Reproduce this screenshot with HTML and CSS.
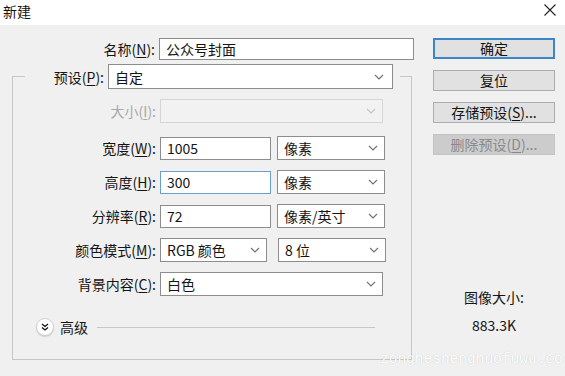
FILE: index.html
```html
<!DOCTYPE html>
<html>
<head>
  <meta charset="utf-8" />
  <title>新建</title>
  <meta name="viewport" content="width=device-width, initial-scale=1">
  <link rel="stylesheet" href="styles.css">
</head>
<body>
  <div class="dialog">
    <div class="titlebar">
      <span class="title">新建</span>
      <svg class="close" width="12" height="12" viewBox="0 0 12 12">
        <path d="M0.5 0.5 L11.5 11.5 M11.5 0.5 L0.5 11.5" stroke="#222" stroke-width="1.1" fill="none"/>
      </svg>
    </div>

    <div class="content">
      <div class="form">
        <div class="row name-row">
          <span class="lbl">名称(<u>N</u>):</span>
          <div class="field w-name">公众号封面</div>
        </div>

        <fieldset class="group">
          <legend class="preset">
            <span class="lbl lbl-preset">预设(<u>P</u>):</span>
            <div class="select w-preset">自定<svg class="chev" viewBox="0 0 10 6"><polyline points="1,1 5,5 9,1"/></svg></div>
          </legend>

          <div class="row row-size">
            <span class="lbl off">大小(<u>I</u>):</span>
            <div class="select off w-full"><svg class="chev" viewBox="0 0 10 6"><polyline points="1,1 5,5 9,1"/></svg></div>
          </div>

          <div class="row">
            <span class="lbl">宽度(<u>W</u>):</span>
            <div class="field w-num">1005</div>
            <div class="select w-unit">像素<svg class="chev" viewBox="0 0 10 6"><polyline points="1,1 5,5 9,1"/></svg></div>
          </div>

          <div class="row">
            <span class="lbl">高度(<u>H</u>):</span>
            <div class="field w-num focus">300</div>
            <div class="select w-unit">像素<svg class="chev" viewBox="0 0 10 6"><polyline points="1,1 5,5 9,1"/></svg></div>
          </div>

          <div class="row">
            <span class="lbl">分辨率(<u>R</u>):</span>
            <div class="field w-num">72</div>
            <div class="select w-unit">像素/英寸<svg class="chev" viewBox="0 0 10 6"><polyline points="1,1 5,5 9,1"/></svg></div>
          </div>

          <div class="row">
            <span class="lbl">颜色模式(<u>M</u>):</span>
            <div class="select w-mode">RGB 颜色<svg class="chev" viewBox="0 0 10 6"><polyline points="1,1 5,5 9,1"/></svg></div>
            <div class="select w-unit">8 位<svg class="chev" viewBox="0 0 10 6"><polyline points="1,1 5,5 9,1"/></svg></div>
          </div>

          <div class="row">
            <span class="lbl">背景内容(<u>C</u>):</span>
            <div class="select w-full">白色<svg class="chev" viewBox="0 0 10 6"><polyline points="1,1 5,5 9,1"/></svg></div>
          </div>

          <div class="advanced">
            <span class="adv-btn">
              <svg width="8" height="8" viewBox="0 0 8 8"><path d="M1 1 L4 3.5 L7 1 M1 4.5 L4 7 L7 4.5" stroke="#111" stroke-width="1.3" fill="none"/></svg>
            </span>
            <span class="adv-text">高级</span>
            <span class="adv-line"></span>
          </div>
        </fieldset>
      </div>

      <div class="side">
        <div class="btn default">确定</div>
        <div class="btn">复位</div>
        <div class="btn">存储预设(<u>S</u>)...</div>
        <div class="btn disabled">删除预设(<u>D</u>)...</div>
        <div class="info">
          <p>图像大小:</p>
          <p>883.3K</p>
        </div>
      </div>
    </div>

    <div class="watermark">zongheshenghuofuwu.co</div>
  </div>
</body>
</html>
```

FILE: styles.css
```css
html, body {
  margin: 0px;
  padding: 0px;
}
body {
  background: #f0f0f0;
  font-family: "Noto Sans CJK SC", "Noto Sans", sans-serif;
  font-size: 14px;
  color: #141414;
}
.dialog {
  position: relative;
  width: 565px;
  height: 376px;
  overflow: hidden;
}

/* title bar */
.titlebar {
  height: 25px;
  background: #fff;
  display: flex;
  align-items: center;
  justify-content: space-between;
  padding: 0 9px 0 3px;
  box-sizing: border-box;
}
.title {
  font-size: 14px;
  line-height: 20px;
  margin-top: -3px;
}
.close {
  margin-top: -5px;
}

/* body */
.content {
  display: flex;
  padding: 13px 0 0 12px;
  gap: 18px;
}
.form {
  width: 403px;
}
.row {
  display: flex;
  align-items: center;
  height: 24px;
  gap: 4px;
  margin-bottom: 10px;
}
.lbl {
  width: 143px;
  text-align: right;
  white-space: nowrap;
  line-height: 24px;
}
.lbl.off {
  color: #a8a8a8;
}
u {
  text-decoration: underline;
  text-underline-offset: 2px;
}

.field, .select {
  height: 23px;
  box-sizing: border-box;
  border: 1px solid #8d8d8d;
  background: #fff;
  padding: 0 6px;
  line-height: 21px;
  white-space: nowrap;
}
.select {
  height: 24px;
  line-height: 22px;
  display: flex;
  align-items: center;
  padding-right: 4px;
}
.select.off {
  background: #f2f2f2;
  border-color: #d6d6d6;
}
.select.off .chev polyline {
  stroke: #c4c4c4;
}
.field.focus {
  border-color: #6a9fcc;
}
.chev {
  width: 10px;
  height: 6px;
  margin: 0 2px 0 auto;
}
.chev polyline {
  fill: none;
  stroke: #707070;
  stroke-width: 1.1;
}

.name-row {
  height: 22px;
  margin-bottom: 4px;
}
.w-name {
  width: 255px;
  height: 22px;
}

/* group box */
.group {
  margin: 0;
  padding: 10px 0 23px 0;
  width: 400px;
  box-sizing: border-box;
  border: 1px solid #c6c6c6;
}
.preset {
  display: flex;
  align-items: center;
  gap: 4px;
  margin-left: 12px;
  padding: 0 7px 0 0;
}
.lbl-preset {
  width: 79px;
}
.w-preset {
  width: 285px;
  height: 25px;
  padding-right: 6px;
}
.row-size {
  margin-bottom: 13px;
}
.w-full {
  width: 223px;
}
.w-num {
  width: 111px;
}
.w-unit {
  width: 108px;
  margin-left: 2px;
}
.w-mode {
  width: 107px;
  margin-right: 5px;
}

.advanced {
  display: flex;
  align-items: center;
  height: 18px;
  margin: 22px 0 0 23px;
}
.adv-btn {
  width: 16px;
  height: 16px;
  border-radius: 50%;
  background: #fff;
  border: 1px solid #d0d0d0;
  box-shadow: 0 1px 1px rgba(0, 0, 0, 0.15);
  display: flex;
  align-items: center;
  justify-content: center;
}
.adv-text {
  margin-left: 6px;
}
.adv-line {
  width: 278px;
  height: 1px;
  background: #c8c8c8;
  margin-left: 9px;
}

/* right column */
.side {
  width: 122px;
  display: flex;
  flex-direction: column;
  gap: 11px;
}
.btn {
  height: 21px;
  box-sizing: border-box;
  background: #e1e1e1;
  border: 1px solid #adadad;
  text-align: center;
  line-height: 19px;
  white-space: nowrap;
}
.btn.default {
  border: 2px solid #3b86c8;
  line-height: 17px;
}
.btn.disabled {
  background: #cccccc;
  border-color: #c4c4c4;
  color: #8a8a8a;
}
.info {
  margin-top: 117px;
  text-align: center;
}
.info p {
  margin: 0;
  line-height: 28px;
}

.watermark {
  position: absolute;
  left: 380px;
  top: 351px;
  font-family: "Liberation Mono", monospace;
  font-size: 14.5px;
  color: #fff;
  text-shadow: 0 0 1px rgba(0, 0, 0, 0.22);
  white-space: nowrap;
}
```
